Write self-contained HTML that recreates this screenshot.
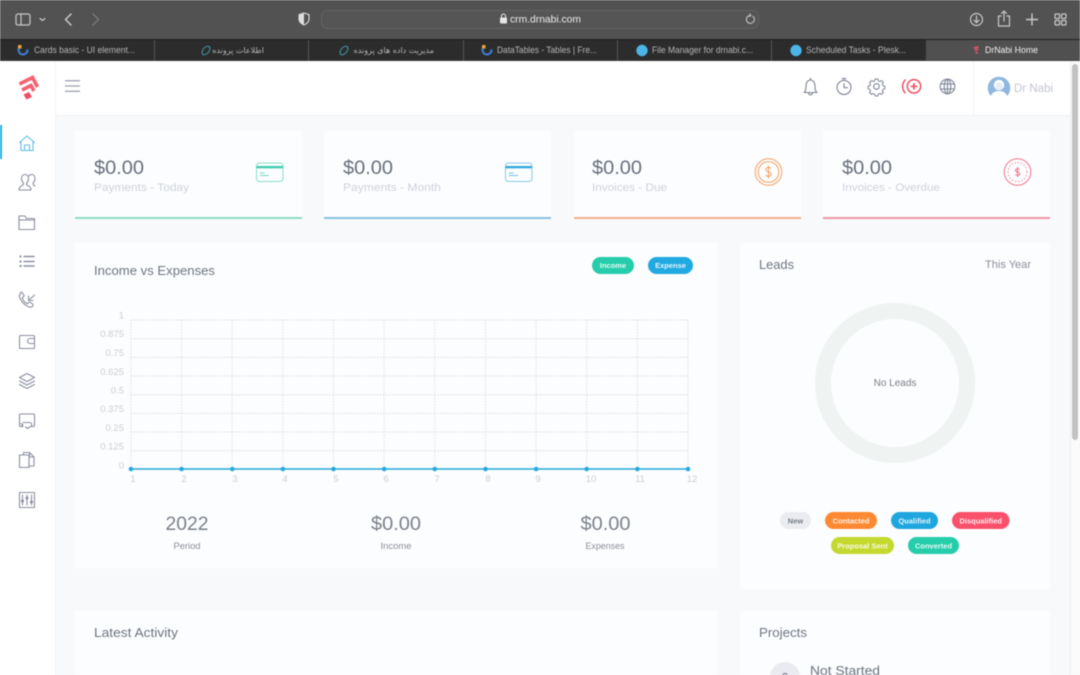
<!DOCTYPE html>
<html><head><meta charset="utf-8"><title>DrNabi Home</title>
<style>
html,body{margin:0;padding:0;width:1080px;height:675px;overflow:hidden;background:#f8f9fb}
svg{display:block;filter:blur(.42px)}
text{font-family:"Liberation Sans","DejaVu Sans",sans-serif}
.fa{font-family:"DejaVu Sans",sans-serif}
.ic{fill:none;stroke:#8b90a0;stroke-width:1.1;stroke-linecap:round;stroke-linejoin:round}
.tb{fill:none;stroke:#c9c9c9;stroke-width:1.2;stroke-linecap:round;stroke-linejoin:round}
.pill{fill:#fff;font-size:7.5px;font-weight:bold;text-anchor:middle;opacity:.88}
.yl{fill:#cbced3;font-size:9.5px}
.xl{fill:#cbced3;font-size:9.5px}
</style></head><body>
<svg width="1080" height="675" viewBox="0 0 1080 675" xmlns="http://www.w3.org/2000/svg">
<rect width="1080" height="675" fill="#f8f9fb"/>
<!-- browser toolbar -->
<rect width="1080" height="40" fill="#525252"/>
<rect y="39" width="1080" height="1.2" fill="#1e1e1e"/>
<rect y="40" width="926" height="21" fill="#2c2c2c"/>
<rect x="926" y="40" width="154" height="21" fill="#505050"/>
<rect y="60.3" width="1080" height=".8" fill="#3c3c3c"/>
<g class="tb">
<rect x="16" y="14" width="14" height="11" rx="2"/><path d="M21 14v11"/>
<path d="M40 18.500l2.500 2 2.500-2"/>
<path d="M71 14l-5.500 5.500 5.500 5.500" stroke-width="1.500"/>
<path d="M93 14l5.500 5.500-5.500 5.500" stroke="#777" stroke-width="1.500"/>
</g>
<path d="M304 13l5 1.700v4.300c0 3-2.200 4.800-5 6-2.800-1.200-5-3-5-6v-4.300z" fill="none" stroke="#ddd" stroke-width="1.100"/>
<path d="M304 13l-5 1.700v4.300c0 3 2.200 4.800 5 6z" fill="#ddd"/>
<rect x="321.500" y="10.500" width="437" height="18" rx="6" fill="#555" stroke="#626262"/>
<rect x="500" y="17.500" width="7" height="6" rx="1" fill="#e6e6e6"/>
<path d="M501.500 17.500v-1.500a2 2 0 0 1 4 0v1.500" fill="none" stroke="#e6e6e6"/>
<text x="510" y="22.500" font-size="10.500" fill="#ececec" textLength="71" lengthAdjust="spacingAndGlyphs">crm.drnabi.com</text>
<path d="M752.500 16a4 4 0 1 1-3-.500M749.500 13.500l1.500 2-2 1.200" fill="none" stroke="#c8c8c8"/>
<g class="tb">
<circle cx="976.500" cy="19.500" r="6"/><path d="M976.500 16v6.500M974 20.200l2.500 2.500 2.500-2.500"/>
<path d="M1001 16h-2.500v10h11v-10h-2.500M1004 21v-10M1001.500 13.500l2.500-2.500 2.500 2.500"/>
<path d="M1032 14v11M1026.500 19.500h11" stroke-width="1.400"/>
<rect x="1055" y="14" width="4.500" height="4.500" rx="1"/><rect x="1061.500" y="14" width="4.500" height="4.500" rx="1"/><rect x="1055" y="20.500" width="4.500" height="4.500" rx="1"/><rect x="1061.500" y="20.500" width="4.500" height="4.500" rx="1"/>
</g>
<!-- tabs -->
<g fill="#555"><rect x="154" y="40" width="1" height="21"/><rect x="308" y="40" width="1" height="21"/><rect x="463" y="40" width="1" height="21"/><rect x="617" y="40" width="1" height="21"/><rect x="771" y="40" width="1" height="21"/></g>
<g font-size="9" fill="#b5b5b5">
<path d="M19 48a4.500 4.500 0 1 0 8.500 1.500" fill="none" stroke="#3c7fd9" stroke-width="2"/><rect x="18" y="45" width="3.500" height="3.500" fill="#e9a23b"/>
<text x="34" y="53" textLength="101" lengthAdjust="spacingAndGlyphs">Cards basic - UI element...</text>
<ellipse cx="206" cy="50.500" rx="3" ry="5" transform="rotate(40 206 50.500)" fill="none" stroke="#3f9aa5"/>
<text class="fa" x="264" y="53" font-size="8" direction="rtl">اطلاعات پرونده</text>
<ellipse cx="344" cy="50.500" rx="3" ry="5" transform="rotate(40 344 50.500)" fill="none" stroke="#3f9aa5"/>
<text class="fa" x="434" y="53" font-size="8" direction="rtl">مدیریت داده های پرونده</text>
<path d="M483 48a4.500 4.500 0 1 0 8.500 1.500" fill="none" stroke="#3c7fd9" stroke-width="2"/><rect x="482" y="45" width="3.500" height="3.500" fill="#e9a23b"/>
<text x="497" y="53" textLength="100" lengthAdjust="spacingAndGlyphs">DataTables - Tables | Fre...</text>
<circle cx="642" cy="50.500" r="5.700" fill="#4cb4e6"/>
<text x="652" y="53" textLength="101" lengthAdjust="spacingAndGlyphs">File Manager for drnabi.c...</text>
<circle cx="796" cy="50.500" r="5.700" fill="#4cb4e6"/>
<text x="806" y="53" textLength="100" lengthAdjust="spacingAndGlyphs">Scheduled Tasks - Plesk...</text>
<path d="M973 47.500l5-1.500 1 1.500-4 1.500zM974 50l4-1.500.8 1.300-3.300 1.300zM975 52.500l2-1 1 1.500-1.500 1z" fill="#e5566b"/>
<text x="985" y="53" fill="#f0f0f0" textLength="53" lengthAdjust="spacingAndGlyphs">DrNabi Home</text>
</g>
<!-- app chrome -->
<rect x="0" y="61" width="1070" height="54" fill="#fff"/>
<rect x="0" y="61" width="55" height="614" fill="#fff"/>
<rect x="55" y="61" width="1" height="614" fill="#f1f3f6"/>
<rect x="55" y="115" width="1015" height="1" fill="#f0f2f5"/>
<rect x="973" y="61" width="1" height="54" fill="#f3f4f7"/>
<rect x="1070" y="61" width="10" height="614" fill="#fbfbfb"/>
<rect x="1070" y="61" width="1" height="614" fill="#eeeeee"/>
<rect x="1072" y="64" width="6" height="376" rx="3" fill="#c2c2c2"/>
<!-- logo -->
<g fill="none" stroke="#f4626f" stroke-width="3.600">
<path d="M19.500 84l13-6.500 5 9.500"/><path d="M22 90l9-4.500 3 5.500"/>
</g>
<path d="M23.500 94.500l5.500-2.500 3 5-5.500 2.500z" fill="#ef4f63"/>
<!-- hamburger -->
<g fill="#a3a8b5"><rect x="65" y="80" width="15" height="1.400"/><rect x="65" y="85.300" width="15" height="1.400"/><rect x="65" y="90.600" width="15" height="1.400"/></g>
<!-- header icons -->
<g class="ic" style="stroke:#7d8494">
<path d="M804 92.500c2-1.800 2-3.500 2-7 0-3 2-5.500 4.500-5.500s4.500 2.500 4.500 5.500c0 3.500 0 5.200 2 7zM808.500 92.800c0 2.800 4 2.800 4 0M810.500 80v-1.800"/>
<circle cx="844" cy="87.500" r="7"/><path d="M844 83.500v4.200h3.500M842 78.500h4M844 78.500v1.500"/>
<circle cx="876.500" cy="86.500" r="2.800"/>
<path d="M875 79h3l.5 2 1.700.8 1.900-1 2 2.100-1 1.800.7 1.700 2 .6v3l-2 .5-.7 1.700 1 1.800-2 2.100-1.900-1-1.700.8-.5 2h-3l-.5-2-1.700-.8-1.900 1-2-2.100 1-1.800-.7-1.700-2-.6v-3l2-.5.7-1.700-1-1.800 2-2.100 1.900 1 1.700-.8z" transform="translate(87.600 7.900) scale(.9)"/>
<circle cx="947.500" cy="86.500" r="7.300"/><ellipse cx="947.500" cy="86.500" rx="3.300" ry="7.300"/><path d="M940.500 84h14M940.500 89h14M947.500 79.200v14.600"/>
</g>
<g fill="none" stroke="#ef5066" stroke-width="1.500">
<circle cx="914" cy="86.300" r="6.700"/><path d="M914 83v6.600M910.700 86.300h6.600" stroke-width="1.700"/>
<path d="M905.500 79.500c-3.800 3.800-3.800 10 0 13.800"/>
</g>
<!-- avatar -->
<circle cx="999" cy="88" r="11.300" fill="#8fb8de"/>
<circle cx="999" cy="85" r="5.200" fill="#fff"/>
<path d="M990 99c1-6 4.500-8 9-8s8 2 9 8c-3 2-6 2.500-9 2.500s-6-.5-9-2.500z" fill="#fff"/>
<circle cx="999" cy="86" r="3.600" fill="#8fb8de" opacity=".25"/>
<text x="1014" y="92" font-size="11.500" fill="#c3c7cf" textLength="39" lengthAdjust="spacingAndGlyphs">Dr Nabi</text>
<!-- sidebar -->
<rect x="0" y="125" width="2" height="34" fill="#1fb0e6"/>
<g class="ic">
<g style="stroke:#62bde6"><path d="M19.500 142.500l7.500-6.500 7.500 6.500M21 141.500v9h12v-9M24.500 150.500v-5.500h5v5.500"/></g>
<path d="M19 190c0-3 2-4 4-5 .7-1 .5-2 0-2.500-1-1-1.500-2.500-1.500-4 0-2.500 1.500-4 3.500-4s3.500 1.500 3.500 4c0 1.500-.5 3-1.500 4-.5.500-.7 1.500 0 2.500 2 1 4 2 4 5zM28.500 176c1-1.200 2-1.500 3-1.500 2 0 3.500 1.500 3.500 4 0 1.500-.5 3-1.500 4-.5.500-.5 1.500 0 2.500l1.500 1"/>
<path d="M19 229.500v-13.500h6l1.500 2.500h8v11zM19 220h15.500"/>
<path d="M24 256.500h10M24 261.500h10M24 266h10" stroke-width="1.500"/><circle cx="20.500" cy="256.500" r=".6"/><circle cx="20.500" cy="261.500" r=".6"/><circle cx="20.500" cy="266" r=".6"/>
<path d="M20.500 294c-1 .7-1.500 1.500-1 3 1.500 4 5 8 9.500 10 1.500.5 3 .3 4-1.500.3-.7 0-1.300-.5-1.700l-2.500-1.500c-.7-.3-1.200 0-1.600.5-.4.600-1 1-1.700.6-2-1.200-3.500-3-4.300-5-.2-.8.300-1.200 1-1.500.6-.4.800-1 .5-1.600l-1.400-2.400c-.5-.7-1.300-.9-2-.4zM34.500 295l-6 5.500M28.500 296v4.500h4.500"/>
<path d="M20.500 335.500h13a1 1 0 0 1 1 1v11a1 1 0 0 1-1 1h-13a1 1 0 0 1-1-1v-11a1 1 0 0 1 1-1zM34.500 338.500h-4.500a2 2 0 0 0 0 5h4.500"/>
<path d="M27 373.500l7.500 4-7.500 4-7.500-4zM19.500 381l7.500 4 7.500-4M19.500 384.500l7.500 4 7.500-4"/>
<path d="M23 426.500h-2.500a1 1 0 0 1-1-1v-10.500a1 1 0 0 1 1-1h13a1 1 0 0 1 1 1v10.500a1 1 0 0 1-1 1h-3M23 422.500h6.500a1.500 1.500 0 0 1 0 4.500l-2 1.500-2-1.500M21 423.500l2 1.500-2 1.500"/>
<path d="M19.500 455h9.500v12.500h-9.500zM23.500 455v-2.500h6l4.500 4.500v9h-5M29.500 452.500v4.500h4.500"/>
<rect x="19.500" y="492.500" width="15" height="15"/><path d="M22.500 495v10M27 495v10M31.500 495v10"/><circle cx="22.500" cy="501" r="1"/><circle cx="27" cy="498" r="1"/><circle cx="31.500" cy="502" r="1"/>
</g>
<!-- stat cards -->
<g fill="#fcfdfe">
<rect x="75" y="131" width="227" height="88"/><rect x="324" y="131" width="227" height="88"/><rect x="574" y="131" width="227" height="88"/><rect x="823" y="131" width="227" height="88"/>
</g>
<rect x="75" y="217" width="227" height="2" fill="#8edcc8"/>
<rect x="324" y="217" width="227" height="2" fill="#87c4e0"/>
<rect x="574" y="217" width="227" height="2" fill="#f3b08e"/>
<rect x="823" y="217" width="227" height="2" fill="#ea96a5"/>
<g font-size="19" fill="#68707c">
<text x="94" y="174" textLength="50" lengthAdjust="spacingAndGlyphs">$0.00</text>
<text x="343" y="174" textLength="50" lengthAdjust="spacingAndGlyphs">$0.00</text>
<text x="592" y="174" textLength="50" lengthAdjust="spacingAndGlyphs">$0.00</text>
<text x="842" y="174" textLength="50" lengthAdjust="spacingAndGlyphs">$0.00</text>
</g>
<g font-size="11" fill="#ced2db">
<text x="94" y="191" textLength="95" lengthAdjust="spacingAndGlyphs">Payments - Today</text>
<text x="343" y="191" textLength="98" lengthAdjust="spacingAndGlyphs">Payments - Month</text>
<text x="592" y="191" textLength="75" lengthAdjust="spacingAndGlyphs">Invoices - Due</text>
<text x="842" y="191" textLength="98" lengthAdjust="spacingAndGlyphs">Invoices - Overdue</text>
</g>
<g fill="none" stroke="#86e0cb"><rect x="256.500" y="163" width="26.500" height="18.500" rx="3"/></g>
<rect x="256.500" y="166" width="26.500" height="2.300" fill="#3ecdb0"/>
<path d="M260 173h4.500M260 175.500h9" stroke="#6ed8c2" fill="none"/>
<rect x="505.500" y="163" width="26.500" height="18.500" rx="3" fill="none" stroke="#86cbe8"/>
<rect x="505.500" y="166" width="26.500" height="2.300" fill="#2fa8dc"/>
<path d="M509 173h4.500M509 175.500h9" stroke="#6cbfe6" fill="none"/>
<g fill="none" stroke="#f3a063">
<circle cx="768.500" cy="172" r="13.300"/><circle cx="768.500" cy="172" r="10.300"/>
<path d="M771 168.500c-1-1.500-5-1.500-5 1 0 3 5.200 1.800 5.200 4.800 0 2.500-4.500 2.500-5.500.7M768.500 165.500v13"/>
</g>
<g fill="none" stroke="#f2758a">
<circle cx="1017.500" cy="172" r="13.300"/><circle cx="1017.500" cy="172" r="9.500" stroke-dasharray="1.200 2"/>
<path d="M1019.500 169.500c-.8-1.200-4-1.200-4 .8 0 2.200 4.200 1.400 4.200 3.600 0 2-3.500 2-4.400.6M1017.500 167v10"/>
</g>
<!-- chart card -->
<rect x="75" y="243" width="642" height="325" fill="#fcfdfe"/>
<rect x="740" y="243" width="310" height="346" fill="#fcfdfe"/>
<rect x="75" y="611" width="642" height="64" fill="#fcfdfe"/>
<rect x="740" y="611" width="310" height="64" fill="#fcfdfe"/>
<text x="94" y="275" font-size="13" fill="#6e7682" textLength="121" lengthAdjust="spacingAndGlyphs">Income vs Expenses</text>
<rect x="592" y="257" width="42" height="17" rx="8.500" fill="#25cdaa"/>
<text class="pill" x="613" y="268">Income</text>
<rect x="648" y="257" width="45" height="17" rx="8.500" fill="#21a9e1"/>
<text class="pill" x="670.500" y="268">Expense</text>
<!-- grid -->
<g stroke="#dcdee2" stroke-width="1" stroke-dasharray="1.500 1.500" fill="none">
<path d="M131 320h557M131 338.700h557M131 357.400h557M131 376h557M131 394.700h557M131 413.400h557M131 432h557M131 450.700h557"/>
<path d="M131 320v149M181.600 320v149M232.300 320v149M282.900 320v149M333.500 320v149M384.200 320v149M434.800 320v149M485.500 320v149M536.100 320v149M586.700 320v149M637.400 320v149M688 320v149"/>
</g>
<g class="yl" text-anchor="end">
<text x="124" y="318.500">1</text><text x="124" y="337">0.875</text><text x="124" y="356">0.75</text><text x="124" y="375">0.625</text><text x="124" y="393.500">0.5</text><text x="124" y="412">0.375</text><text x="124" y="431">0.25</text><text x="124" y="449.500">0.125</text><text x="124" y="468.500">0</text>
</g>
<g class="xl" text-anchor="middle">
<text x="133" y="482">1</text><text x="184" y="482">2</text><text x="235" y="482">3</text><text x="285" y="482">4</text><text x="336" y="482">5</text><text x="386" y="482">6</text><text x="437" y="482">7</text><text x="488" y="482">8</text><text x="538" y="482">9</text><text x="591" y="482">10</text><text x="640" y="482">11</text><text x="692" y="482">12</text>
</g>
<path d="M131 469h557" stroke="#25a9de" stroke-width="1.500"/>
<g fill="#25a9de">
<circle cx="131" cy="469" r="2.300"/><circle cx="181.600" cy="469" r="2.300"/><circle cx="232.300" cy="469" r="2.300"/><circle cx="282.900" cy="469" r="2.300"/><circle cx="333.500" cy="469" r="2.300"/><circle cx="384.200" cy="469" r="2.300"/><circle cx="434.800" cy="469" r="2.300"/><circle cx="485.500" cy="469" r="2.300"/><circle cx="536.100" cy="469" r="2.300"/><circle cx="586.700" cy="469" r="2.300"/><circle cx="637.400" cy="469" r="2.300"/><circle cx="688" cy="469" r="2.300"/>
</g>
<g font-size="19" fill="#7b818b" text-anchor="middle">
<text x="187" y="530" textLength="43" lengthAdjust="spacingAndGlyphs">2022</text>
<text x="396" y="530" textLength="50" lengthAdjust="spacingAndGlyphs">$0.00</text>
<text x="605.500" y="530" textLength="50" lengthAdjust="spacingAndGlyphs">$0.00</text>
</g>
<g font-size="9" fill="#8a8f97" text-anchor="middle">
<text x="187" y="549" textLength="27" lengthAdjust="spacingAndGlyphs">Period</text>
<text x="396" y="549" textLength="31" lengthAdjust="spacingAndGlyphs">Income</text>
<text x="605" y="549" textLength="39" lengthAdjust="spacingAndGlyphs">Expenses</text>
</g>
<!-- leads -->
<text x="759" y="269" font-size="12.500" fill="#6e7682" textLength="35" lengthAdjust="spacingAndGlyphs">Leads</text>
<text x="985" y="268" font-size="11" fill="#888e97" textLength="46" lengthAdjust="spacingAndGlyphs">This Year</text>
<circle cx="895" cy="383" r="72" fill="none" stroke="#eff3f2" stroke-width="16"/>
<text x="895" y="386" font-size="10" fill="#7a7f87" text-anchor="middle">No Leads</text>
<rect x="780" y="512" width="31" height="17" rx="8.500" fill="#eaecf1"/>
<text class="pill" x="795.500" y="523.500" style="fill:#666c78">New</text>
<rect x="825" y="512" width="52" height="17" rx="8.500" fill="#fd8a32"/>
<text class="pill" x="851" y="523.500">Contacted</text>
<rect x="891" y="512" width="47" height="17" rx="8.500" fill="#1fa6df"/>
<text class="pill" x="914.500" y="523.500">Qualified</text>
<rect x="952" y="512" width="57.500" height="17" rx="8.500" fill="#f9516c"/>
<text class="pill" x="980.700" y="523.500">Disqualified</text>
<rect x="831" y="537" width="63" height="17" rx="8.500" fill="#c4d92e"/>
<text class="pill" x="862.500" y="548.500">Proposal Sent</text>
<rect x="908" y="537" width="51" height="17" rx="8.500" fill="#25cdaa"/>
<text class="pill" x="933.500" y="548.500">Converted</text>
<!-- bottom -->
<text x="94" y="637" font-size="13" fill="#6e7682" textLength="84" lengthAdjust="spacingAndGlyphs">Latest Activity</text>
<text x="759" y="637" font-size="13" fill="#6e7682" textLength="48" lengthAdjust="spacingAndGlyphs">Projects</text>
<circle cx="785" cy="677" r="15" fill="#e9ebf1"/>
<path d="M783 675c0-2 4-2 4 0" fill="none" stroke="#666c78"/>
<text x="810" y="675" font-size="13" fill="#6a727e" textLength="70" lengthAdjust="spacingAndGlyphs">Not Started</text>
</svg>
</body></html>
